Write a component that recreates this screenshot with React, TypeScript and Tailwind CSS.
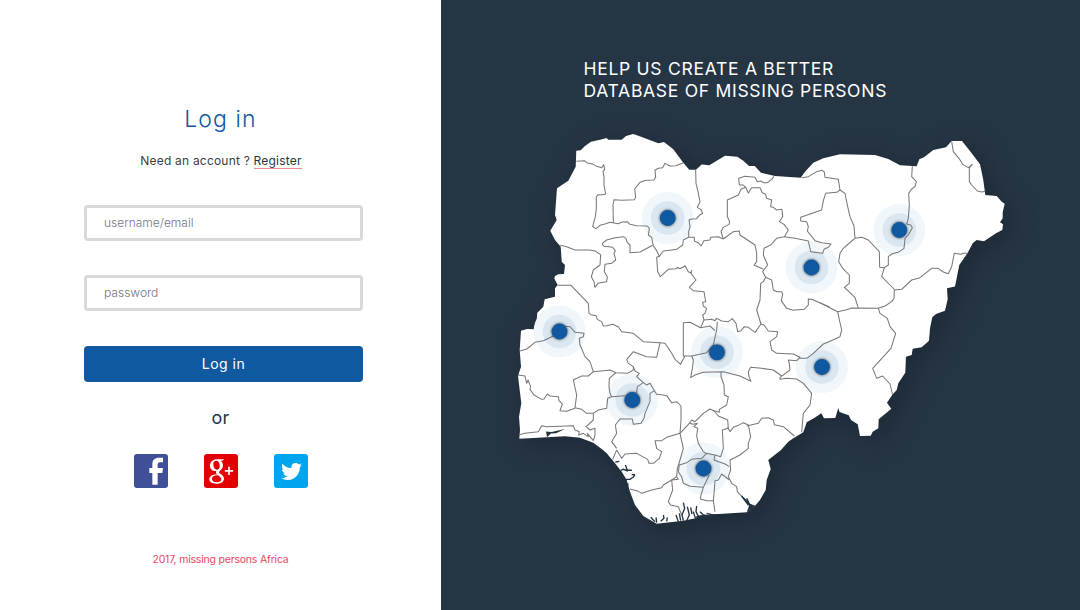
import React from 'react';
import { FaTwitter } from 'react-icons/fa';

const COUNTRY =
  'M576.3 150.7 580.7 150.3 585 146 591 141.7 600 139.7 606.7 138 608.3 139.7 621.7 139.7 626 136 633.3 134 639 136 658.3 143.3 664 142 673.3 149.3 683.3 162.7 689.3 169.7 696 169.8 701.7 164.5 709.3 165.3 725 155.7 737.3 156.7 743.3 160.7 749 166 754.7 166 761 172.7 775 176 800.7 177.7 805 171.7 813.3 162.7 823.3 158.3 840 154.3 875 155 888.3 159 900 165.3 916.7 166.3 919.3 159.3 924 157.3 933.3 150 946 147.3 951.7 141 962 141 971.7 153.3 980 164.3 983.3 180 985.3 195 996.7 196 1001.7 201.7 1004.7 203.7 1002.7 212.3 1002.7 218.3 1000 222.3 1003 224.3 1002.3 230 996 233.3 984 241.3 976.7 240 972.7 243.3 967.7 252.7 959.3 265 956.7 278.3 955 286.5 947 288.3 947.7 299.3 945 310.7 936 314 932.3 317.3 930 328.3 929 340.7 921.7 347.3 912.7 348.7 911.7 355 906 356.7 905.3 372.7 898.3 383.3 896.7 390 892.7 394.3 887 402.7 891.3 408.7 878.7 419.3 878.3 428.3 872.7 431.7 870.7 435.7 860 436 857.7 424.3 851 420 848.7 415.3 839.5 412 838.3 408 835.3 418 824 418.3 821.3 413.3 815 417.5 806.7 422.3 803.3 432.3 793.3 438.3 788.3 441.7 781 450 768.3 460 770.7 469 766.7 480 765.7 490 760 500 754.3 506.7 746.7 512.3 715 514.3 683.3 520.7 656.7 523.7 643.3 516 635 505 630 491.7 626.7 480 621.7 471.7 615 463.3 606.7 453.3 602 449.3 593.3 442.7 580 437.7 565 436.3 519.3 438.7 520 430 519 416.7 521.3 403.3 519.3 386.7 518 376 521 366.7 519.7 350 521 330.7 527 329 534 329.3 536.7 320 537.3 312.7 543.3 306.7 544.7 299.3 555 296.7 555 288.3 557.7 285 554.3 278.5 555 276 558.3 274.3 564 274 565 265 561.7 261.7 560.7 246.7 555 240 550.3 230.7 556.7 220 555 215 557 188.3 568.3 180.7 575.7 166.7Z';

type Region = { name: string; origin: string; borders: string[] };

// State borders are digitised at three times the map scale, sheet by sheet.
const REGIONS: Region[] = [
  {
    name: 'north-west',
    origin: 'translate(540 120) scale(0.33333)',
    borders: [
      'M109 124 133 122 140 128 160 133 170 139 185 143 191 134 194 148 189 155 192 170 192 195 197 222 187 224 175 224 169 230 169 265 166 290 158 320 168 326 180 316 195 312 210 307 218 308 235 311 246 306 262 305 270 313 290 317 322 318 328 325 325 345 335 352 340 378 350 392 358 409 370 393 395 390 410 388 428 375 430 360 446 352 446 335 450 320 447 300 455 297 470 296 480 284 488 280 482 268 472 262 480 245 474 215 468 190 467 150',
      'M220 308 219 255 222 239 245 241 283 239 287 232 284 207 300 187 318 181 342 180 347 172 345 150 355 145 368 143 375 130 390 138 408 137 430 128',
      'M61 376 80 380 105 390 150 390 165 393 182 404 180 435 160 450 154 470 162 485 165 502 174 490 200 485 202 470 193 455 195 433 215 430 227 420 222 400 226 392 218 382 190 378 187 370 200 360 225 353 250 350 258 355 262 368 270 375 270 398 300 396 338 376',
      'M358 409 350 412 353 455 361 470 385 448 410 446 412 442 420 446 428 442 435 437 445 455 455 460',
      'M446 352 463 352 463 363 475 368 483 378 492 362 510 360 512 352 535 350 550 357',
    ],
  },
  {
    name: 'north-central',
    origin: 'translate(680 130) scale(0.33333)',
    borders: [
      'M130 327 123 305 130 292 147 283 149 275 142 260 142 210 175 195 183 178 197 172 205 189 215 173 240 173 247 188 257 193 260 205 275 210 272 230 280 232 290 240 306 238 308 260 298 275 312 283 325 300 313 320 290 325 272 345 252 355 250 375 263 405 248 425 257 442 250 455 242 460 240 510 230 540 243 582',
      'M130 327 160 305 178 303 180 315 225 345 230 370 230 395 222 405 250 418',
      'M197 172 190 165 178 165 176 145 195 139 225 142 232 155 243 153 250 158 262 158 275 148 282 139',
      'M313 320 345 325 385 333 392 365 428 370 432 358 445 352 453 342 425 338 405 332 382 303 385 290 380 275 362 273 362 262 425 240 430 212 437 190 470 187 480 180 475 148 435 142 433 126 426 121 410 125 385 140 365 143',
      'M480 180 495 190 503 230 510 260 522 288 525 325',
      'M257 442 275 450 280 480 290 485 305 485 308 492 304 512 320 535 340 541 372 538 385 525 385 507 395 508 450 532',
    ],
  },
  {
    name: 'north-east',
    origin: 'translate(840 125) scale(0.33333)',
    borders: [
      'M45 340 65 337 85 345 118 380 119 427 133 428 145 420 145 395 155 387 178 380 192 370 195 340 205 330 217 308 212 300 200 297 205 280 208 240 206 205 215 192 225 185 229 170 215 155 217 124',
      'M45 340 35 348 10 370 0 385 -4 410 8 430 28 450 28 475 13 487 45 517 55 550',
      'M133 428 125 455 150 480 165 495 185 493 215 465 240 458 275 430 295 430 310 441 325 446 335 425 343 385 362 388 370 385 383 385',
      'M163 495 162 520 155 530 135 543 115 550 35 549 20 554 -7 560 -25 551 -60 533',
      'M335 50 340 80 357 100 368 118 385 128 397 118 388 128 388 170 395 180 412 198 425 201 436 199',
    ],
  },
  {
    name: 'south-west',
    origin: 'translate(510 270) scale(0.33333)',
    borders: [
      'M143 46 183 46 235 100 237 130 243 134 258 137 262 148 275 155 280 168 290 167 308 163 325 170 335 185 370 190 400 215 450 218 465 220 485 250 495 268 512 283 518 270 525 258',
      'M450 218 440 262 410 260 370 245 350 268 355 280 370 290 370 300 352 310 318 308 300 300 280 302 250 305 240 275 225 260 210 225 208 205 220 200 222 190 195 187 180 170 160 168',
      'M30 243 50 237 75 217 100 212 130 198',
      'M250 305 235 318 215 318 190 330 200 375 195 413 215 418 230 430 250 430 265 420 290 415 293 385 305 380 345 377',
      'M318 308 298 325 297 350 300 370 305 380',
      'M370 290 375 303 388 310 380 320 400 338 382 350 380 370',
      'M400 338 410 345 420 340 433 362 420 370 420 395 405 430 402 445 393 460 370 463 367 447 330 447 316 465 320 490 305 515 320 535',
      'M433 362 440 373 460 375 470 377 485 398 500 395 513 408 513 450',
      'M24 315 45 318 50 340 54 330 62 350 60 358 72 375 95 388 102 387 112 372 120 378 145 380 147 392 157 402 150 422 170 424 195 415',
      'M250 430 250 450 228 470 240 480 255 475 255 495 250 512',
      'M28 494 45 490 85 485 95 467 110 470 190 467 195 480 208 485 206 495 220 490 235 500 232 490 250 512',
    ],
  },
  {
    name: 'middle-belt',
    origin: 'translate(660 270) scale(0.33333)',
    borders: [
      'M95 0 93 10 108 30 88 52 100 62 132 65 137 95 128 97 130 108 140 115 135 130 128 135 132 150 155 148 165 152 170 145 185 153 205 155 217 146 228 160 233 185 243 182 253 170 265 172 285 187 303 162 312 165 325 183 353 185 350 200 330 215 335 240 350 250 400 252 420 262 410 272 385 270 388 282 390 300 360 322 360 328 380 325 410 327 430 340 455 370 450 405 430 430 425 487',
      'M132 150 122 173 90 157 70 158 70 258 95 258 140 248 160 225 170 180 172 155',
      'M122 173 150 168 165 182',
      'M95 258 100 270 98 290 92 323 105 315 130 307 190 305 240 318 273 334 267 320 265 305 272 292 305 295 340 300 365 318',
      'M418 265 440 265 460 250 490 222 505 216 540 200 545 180 540 158 533 125',
      'M183 305 183 320 192 345 193 375 205 380 200 405 178 418 178 427 162 422 150 417 130 430 105 455 95 450 88 460',
      'M655 115 660 130 682 145 690 170 707 190 693 235 638 295 650 325 668 318 690 342 698 375',
    ],
  },
  {
    name: 'delta',
    origin: 'translate(600 400) scale(0.33333)',
    borders: [
      'M243 60 240 100 250 145 240 180 232 205 230 230 215 240 190 255 185 263 155 270 125 280 115 274 90 267',
      'M240 100 200 112 185 122 165 122 170 145 185 155 178 175 160 190 147 190 143 178 110 160 75 162 65 175 50 150',
      'M50 150 38 178',
      'M240 100 268 70',
      'M268 70 280 73 292 70 282 80 293 85 290 108 295 130 310 155 318 160 345 165 362 170 370 145 367 90 385 85 383 60 355 48 340 30',
      'M383 82 390 95 400 82 415 76 430 68 445 75 452 110 445 130 445 145 420 165 390 180 392 210 385 230 395 250 410 260 412 275 455 320',
      'M440 78 475 70 485 55 505 53 520 60 523 74 550 80 583 108',
      'M320 160 305 175 275 178 260 188 238 195 235 215 245 230 250 250 270 259 290 260 310 262 328 225',
      'M345 165 342 180 375 192 388 200',
      'M388 240 365 222 355 240 345 242 343 270 340 302 345 335',
      'M310 262 303 285 301 297 320 302 340 302',
      'M230 230 235 238 215 240 218 270 205 305 212 315 235 320 245 345',
    ],
  },
];

// Lagoons and river mouths along the coast.
const CREEKS =
  'M46 186 58 184 M62 211 70 208 84 213 M76 195 82 210 96 211 M76 238 90 238 100 231 105 224 M95 224 105 224 M82 262 84 250 M152 352 165 365 M168 352 170 368 M190 345 192 355 182 364 M202 352 200 364 M228 345 235 365 M238 340 242 362 M250 308 254 325 246 345 250 362 M262 320 268 345 260 362 M272 322 276 342 M290 318 288 335 298 355 M300 335 310 345 325 348 M280 335 286 355 300 352 M320 340 345 346 M425 288 435 302 445 315 M440 295 450 315 M460 318 448 312';

const LOCATIONS = [
  { x: 667.7, y: 218 },
  { x: 899.3, y: 230 },
  { x: 811.5, y: 267.5 },
  { x: 559.5, y: 331.5 },
  { x: 717, y: 352.3 },
  { x: 822, y: 367 },
  { x: 632.3, y: 400 },
  { x: 703.5, y: 468.5 },
];

function NigeriaMap() {
  return (
    <svg
      viewBox="510 125 500 410"
      width="500"
      height="410"
      className="block overflow-visible"
      role="img"
    >
      <defs>
        <filter id="land-shadow" x="-15%" y="-15%" width="130%" height="130%" colorInterpolationFilters="sRGB">
          <feDropShadow dx="6" dy="6" stdDeviation="13" floodColor="#0c141c" floodOpacity="0.38" />
        </filter>
        <filter id="pin-shadow" x="-50%" y="-50%" width="200%" height="200%" colorInterpolationFilters="sRGB">
          <feDropShadow dx="0" dy="0" stdDeviation="1.5" floodColor="#000" floodOpacity="0.75" />
        </filter>
      </defs>
      <path d={COUNTRY} fill="#fff" filter="url(#land-shadow)" />
      {LOCATIONS.map((p) => (
        <g key={`${p.x}-${p.y}`}>
          <circle cx={p.x} cy={p.y} r="26" fill="#f0f6fa" />
          <circle cx={p.x} cy={p.y} r="16.8" fill="#dae7f1" />
        </g>
      ))}
      {REGIONS.map((r) => (
        <g key={r.name} transform={r.origin} fill="none" stroke="#777" strokeWidth="3.1" strokeLinejoin="round">
          {r.borders.map((d) => (
            <path key={d} d={d} />
          ))}
        </g>
      ))}
      <g transform="translate(600 400) scale(0.33333)">
        <path d={CREEKS} fill="none" stroke="#243341" strokeWidth="4" />
        <path d="M425 287 440 300 450 312 468 318 458 325 440 337 447 318Z M285 350 300 346 350 342 348 348 300 358Z" fill="#243341" />
      </g>
      <path d="M546 431.6 551.5 432 565 429 556 433.3 551 433.5 547 437.3Z" fill="#243341" />
      {LOCATIONS.map((p) => (
        <circle key={`${p.x}-${p.y}`} cx={p.x} cy={p.y} r="7.9" fill="#10589f" filter="url(#pin-shadow)" />
      ))}
    </svg>
  );
}

function SocialLinks() {
  return (
    <div className="flex gap-9 pl-[134px]">
      <a className="flex size-[34px] overflow-hidden rounded-[3px] bg-[#3f4f98]">
        <svg viewBox="0 0 102 102" className="size-[34px]" fill="#fff">
          <path d="M55 92V57H46V42H55V32C55 17 62 11 75 11H87V25H79C73 25 71 27 71 33V42H87L85 57H71V92Z" />
        </svg>
      </a>
      <a className="flex size-[34px] overflow-hidden rounded-[3px] bg-[#e30000]">
        <svg viewBox="0 0 102 102" className="size-[34px]">
          <path
            fill="#fff"
            fillRule="evenodd"
            d="M61 16 55 20H50C55 24 57 29 57 34C57 42 53 46 48 50C44 53 44 56 49 59C57 64 60 68 60 74C60 83 50 89 37 89C24 89 16 84 16 76C16 68 24 62 39 61C36 58 35 55 37 51C25 52 18 45 18 35C18 23 28 16 39 16ZM37 20C30 20 27 25 28 33C29 42 34 48 40 47C46 46 48 41 47 34C46 26 43 20 37 20ZM40 64C30 64 24 68 24 75C24 81 30 85 39 85C47 85 52 81 52 76C52 71 48 69 42 64Z"
          />
          <path d="M75 38V63M62.500 50.500H87.500" stroke="#fff" strokeWidth="5" />
        </svg>
      </a>
      <a className="flex size-[34px] items-center justify-center rounded-[3px] bg-[#00a4ef] text-white">
        <FaTwitter size={21} />
      </a>
    </div>
  );
}

const FIELD =
  'h-9 w-full rounded-[4px] border-3 border-[#d9d9d9] px-[17px] pb-px text-[12px] font-light outline-none placeholder:text-[#6f777f]';

export default function App() {
  return (
    <div className="flex h-[610px] w-[1080px] overflow-hidden bg-white font-['Inter',sans-serif]">
      <section className="flex w-[441px] shrink-0 flex-col pt-[103px]">
        <h1 className="text-center text-[23px] leading-8 font-light tracking-[1.1px] text-[#10589f]">Log in</h1>
        <p className="mt-[18px] pl-px text-center text-[12px] leading-4 tracking-[0.2px] text-[#3a3f45]">
          Need an account ?{' '}
          <a className="inline-block border-b border-[#f08c9a] leading-[15px] text-[#263544]">Register</a>
        </p>
        <form className="mt-9 flex flex-col gap-[34px] pr-[78px] pl-[84px]">
          <input className={FIELD} placeholder="username/email" />
          <input type="password" className={FIELD} placeholder="password" />
          <button
            type="button"
            className="mt-px h-9 w-full rounded-[4px] bg-[#10589f] pb-px text-[14px] tracking-[0.5px] text-white"
          >
            Log in
          </button>
        </form>
        <p className="mt-6 text-center text-[18px] leading-6 tracking-[0.3px] text-[#263544]">or</p>
        <div className="mt-6">
          <SocialLinks />
        </div>
        <footer className="mt-16 text-center text-[10.5px] leading-4 tracking-[-0.2px] text-[#e8475f]">
          2017, missing persons Africa
        </footer>
      </section>
      <section className="flex flex-1 flex-col bg-[#263544] pt-[58px]">
        <h2 className="pl-[142.5px] text-[17.5px] leading-[22px] tracking-[0.72px] whitespace-nowrap text-white">
          HELP US CREATE A BETTER
          <br />
          DATABASE OF MISSING PERSONS
        </h2>
        <div className="mt-[23px] pl-[69px]">
          <NigeriaMap />
        </div>
      </section>
    </div>
  );
}
